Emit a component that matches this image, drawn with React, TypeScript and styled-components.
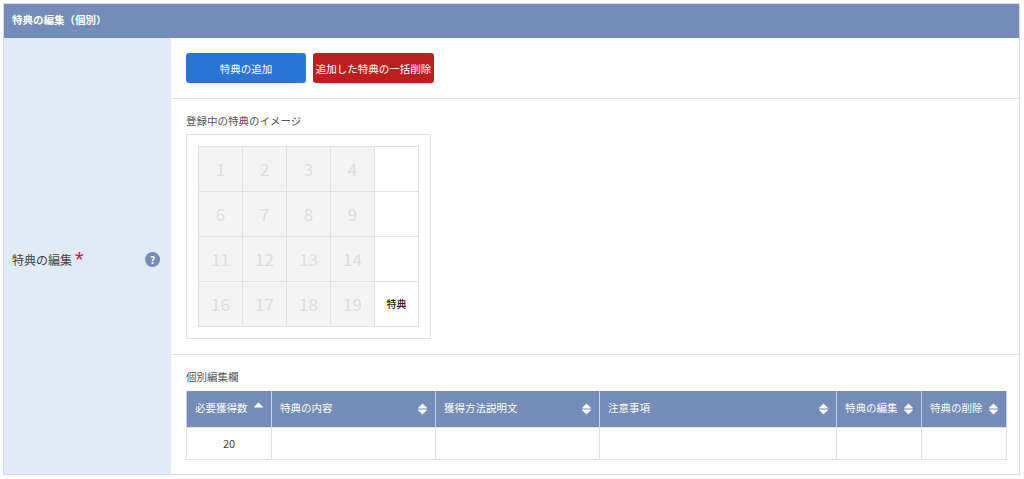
import styled, { createGlobalStyle } from "styled-components";

const GlobalStyle = createGlobalStyle`
  html, body {
    margin: 0;
    padding: 0;
    background: #fff;
  }
  body {
    font-family: "Noto Sans CJK JP", "Noto Sans", sans-serif;
    color: #444;
    overflow: hidden;
  }
  * {
    box-sizing: border-box;
  }
`;

const Page = styled.div`
  padding: 3px 3px 0 3px;
  width: 1024px;
  height: 479px;
`;

const Panel = styled.section`
  width: 1017px;
  height: 472px;
  border: 1px solid #d5dbe3;
  display: flex;
  flex-direction: column;
`;

const PanelHeader = styled.h2`
  margin: 0;
  height: 34px;
  flex: none;
  padding-left: 8px;
  background: #748cb7;
  color: #fff;
  font-size: 10.5px;
  font-weight: 700;
  line-height: 32px;
`;

const PanelBody = styled.div`
  flex: 1;
  display: flex;
  min-height: 0;
`;

const SideLabel = styled.div`
  width: 167px;
  flex: none;
  background: #e1ebf5;
  display: flex;
  align-items: center;
  justify-content: space-between;
  padding: 7px 11px 0 8px;
  font-size: 12px;
`;

const LabelText = styled.span`
  display: flex;
  align-items: flex-start;
  color: #444;
`;

const Required = styled.span`
  color: #c8202a;
  font-family: "Liberation Sans", sans-serif;
  font-size: 22px;
  line-height: 18px;
  margin-left: 3px;
`;

const HelpBadge = styled.span`
  width: 15px;
  height: 15px;
  border-radius: 50%;
  background: #748cb7;
  color: #fff;
  font-size: 10px;
  font-weight: 700;
  line-height: 15px;
  text-align: center;
`;

const Content = styled.div`
  flex: 1;
  min-width: 0;
`;

const ButtonRow = styled.div`
  height: 61px;
  padding: 15px 0 0 15px;
  display: flex;
  gap: 7px;
  border-bottom: 1px solid #e2e5e9;
`;

const ActionButton = styled.button<{ $tone: "blue" | "red" }>`
  width: ${(p) => (p.$tone === "blue" ? "120px" : "121px")};
  height: 30px;
  padding: 0;
  border: none;
  border-radius: 3px;
  background: ${(p) => (p.$tone === "blue" ? "#2a75d6" : "#bb1f20")};
  color: #fff;
  font-family: inherit;
  font-size: 10.5px;
  font-weight: 400;
  white-space: nowrap;
`;

const ImageSection = styled.div`
  height: 256px;
  padding: 14px 0 0 15px;
  border-bottom: 1px solid #e2e5e9;
`;

const SectionTitle = styled.div`
  font-size: 10.5px;
  line-height: 16px;
  color: #555;
`;

const CardFrame = styled.div`
  margin-top: 5px;
  width: 245px;
  height: 205px;
  border: 1px solid #e2e2e2;
  padding: 11px;
`;

const StampGrid = styled.div`
  display: grid;
  grid-template-columns: repeat(5, 44px);
  grid-auto-rows: 45px;
  width: 221px;
  height: 181px;
  border: 1px solid #e2e2e2;
  border-width: 1px 0 0 1px;
`;

const Stamp = styled.div<{ $used?: boolean }>`
  display: flex;
  align-items: center;
  justify-content: center;
  padding-bottom: 2px;
  border: 1px solid #e2e2e2;
  border-width: 0 1px 1px 0;
  background: ${(p) => (p.$used ? "#f4f4f4" : "#fff")};
  color: #dedede;
  font-size: 17px;
`;

const RewardLabel = styled.span`
  color: #222;
  font-size: 10px;
  font-weight: 500;
`;

const TableSection = styled.div`
  padding: 14px 0 0 15px;
`;

const EditTable = styled.table`
  margin-top: 6px;
  width: 820px;
  border-collapse: collapse;
  table-layout: fixed;
`;

const HeadCell = styled.th<{ $width: number }>`
  position: relative;
  width: ${(p) => p.$width}px;
  height: 36px;
  padding: 0 0 2px 8px;
  background: #748cb7;
  border: 1px solid #c8d2e2;
  border-width: 0 1px;
  color: #fff;
  font-size: 10.5px;
  font-weight: 400;
  text-align: left;
  white-space: nowrap;
`;

const SortIcon = styled.svg<{ $single: boolean }>`
  position: absolute;
  right: 8px;
  top: ${(p) => (p.$single ? "11px" : "12px")};
  width: 9px;
  height: 12px;
`;

const BodyCell = styled.td`
  height: 32px;
  border: 1px solid #e2e2e2;
  font-size: 11px;
  color: #444;
  text-align: center;
`;

const columns = [
  { label: "必要獲得数", width: 85, sort: "asc" },
  { label: "特典の内容", width: 164, sort: "none" },
  { label: "獲得方法説明文", width: 164, sort: "none" },
  { label: "注意事項", width: 237, sort: "none" },
  { label: "特典の編集", width: 85, sort: "none" },
  { label: "特典の削除", width: 85, sort: "none" },
];

const rows = [0, 1, 2, 3];

function SortMark({ sort }: { sort: string }) {
  return (
    <SortIcon viewBox="0 0 9 12" $single={sort === "asc"}>
      <path
        d="M4.5 0.8 L8.6 4.8 Q8.9 5.3 8.3 5.3 H0.7 Q0.1 5.3 0.4 4.8 Z"
        fill="#fff"
        stroke="#fff"
        strokeWidth="0.4"
        strokeLinejoin="round"
      />
      {sort === "none" && (
        <path
          d="M4.5 11.2 L8.6 7.2 Q8.9 6.7 8.3 6.7 H0.7 Q0.1 6.7 0.4 7.2 Z"
          fill="#fff"
          stroke="#fff"
          strokeWidth="0.4"
          strokeLinejoin="round"
        />
      )}
    </SortIcon>
  );
}

export default function App() {
  return (
    <>
      <GlobalStyle />
      <Page>
        <Panel>
          <PanelHeader>特典の編集（個別）</PanelHeader>
          <PanelBody>
            <SideLabel>
              <LabelText>
                特典の編集<Required>*</Required>
              </LabelText>
              <HelpBadge>?</HelpBadge>
            </SideLabel>
            <Content>
              <ButtonRow>
                <ActionButton $tone="blue">特典の追加</ActionButton>
                <ActionButton $tone="red">追加した特典の一括削除</ActionButton>
              </ButtonRow>
              <ImageSection>
                <SectionTitle>登録中の特典のイメージ</SectionTitle>
                <CardFrame>
                  <StampGrid>
                    {rows.map((row) =>
                      [1, 2, 3, 4, 5].map((col) => {
                        const num = row * 5 + col;
                        if (col === 5) {
                          return (
                            <Stamp key={num}>
                              {row === 3 && <RewardLabel>特典</RewardLabel>}
                            </Stamp>
                          );
                        }
                        return (
                          <Stamp key={num} $used>
                            {num}
                          </Stamp>
                        );
                      })
                    )}
                  </StampGrid>
                </CardFrame>
              </ImageSection>
              <TableSection>
                <SectionTitle>個別編集欄</SectionTitle>
                <EditTable>
                  <thead>
                    <tr>
                      {columns.map((c) => (
                        <HeadCell key={c.label} $width={c.width}>
                          {c.label}
                          <SortMark sort={c.sort} />
                        </HeadCell>
                      ))}
                    </tr>
                  </thead>
                  <tbody>
                    <tr>
                      <BodyCell>20</BodyCell>
                      <BodyCell />
                      <BodyCell />
                      <BodyCell />
                      <BodyCell />
                      <BodyCell />
                    </tr>
                  </tbody>
                </EditTable>
              </TableSection>
            </Content>
          </PanelBody>
        </Panel>
      </Page>
    </>
  );
}
